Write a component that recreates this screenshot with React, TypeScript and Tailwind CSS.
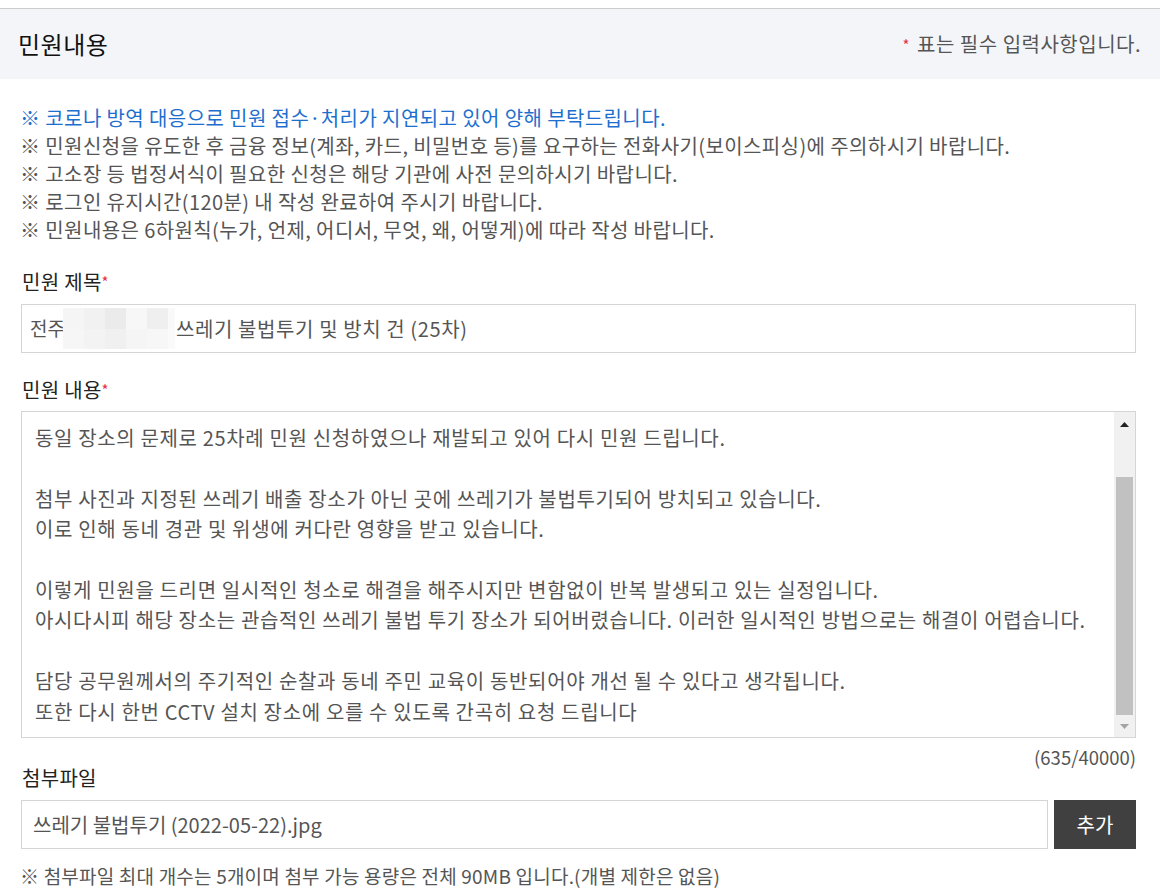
import React from "react";

const font = { fontFamily: '"Noto Sans CJK KR", "Noto Sans", sans-serif' };

const notices = [
  "※ 민원신청을 유도한 후 금융 정보(계좌, 카드, 비밀번호 등)를 요구하는 전화사기(보이스피싱)에 주의하시기 바랍니다.",
  "※ 고소장 등 법정서식이 필요한 신청은 해당 기관에 사전 문의하시기 바랍니다.",
  "※ 로그인 유지시간(120분) 내 작성 완료하여 주시기 바랍니다.",
  "※ 민원내용은 6하원칙(누가, 언제, 어디서, 무엇, 왜, 어떻게)에 따라 작성 바랍니다.",
];

const body = [
  "동일 장소의 문제로 25차례 민원 신청하였으나 재발되고 있어 다시 민원 드립니다.",
  "",
  "첨부 사진과 지정된 쓰레기 배출 장소가 아닌 곳에 쓰레기가 불법투기되어 방치되고 있습니다.",
  "이로 인해 동네 경관 및 위생에 커다란 영향을 받고 있습니다.",
  "",
  "이렇게 민원을 드리면 일시적인 청소로 해결을 해주시지만 변함없이 반복 발생되고 있는 실정입니다.",
  "아시다시피 해당 장소는 관습적인 쓰레기 불법 투기 장소가 되어버렸습니다. 이러한 일시적인 방법으로는 해결이 어렵습니다.",
  "",
  "담당 공무원께서의 주기적인 순찰과 동네 주민 교육이 동반되어야 개선 될 수 있다고 생각됩니다.",
  "또한 다시 한번 CCTV 설치 장소에 오를 수 있도록 간곡히 요청 드립니다",
];

export default function App() {
  return (
    <div className="w-[1160px] h-[888px] bg-white overflow-hidden text-[#555]" style={font}>
      <div className="h-[8px]" />
      <div className="h-[71px] border-t border-[#cccccc] bg-[#f4f5f9] flex items-center justify-between pl-[18px] pr-[19px]">
        <div className="text-[24px] tracking-[0.5px] text-[#111] leading-none">민원내용</div>
        <div className="text-[20px] tracking-[0.5px] text-[#555] leading-none flex items-center">
          <span className="text-[#e0344a] text-[15px] mr-[7px]">*</span>표는 필수 입력사항입니다.
        </div>
      </div>

      <div className="pl-[20px] pr-[24px] pt-[25px]">
        <div className="text-[20px] tracking-[0.4px] leading-[28px] whitespace-nowrap">
          <div className="text-[#1d6fce]">※ 코로나 방역 대응으로 민원 접수·처리가 지연되고 있어 양해 부탁드립니다.</div>
          {notices.map((n) => (
            <div key={n}>{n}</div>
          ))}
        </div>
      </div>

      <div className="pl-[21px] pr-[24px]">
        <div className="mt-[24px] pl-[1px] text-[20px] tracking-[0.3px] leading-[28px] text-[#222]">
          민원 제목<span className="text-[#e0344a] text-[15px] align-top">*</span>
        </div>
        <div className="mt-[8px] h-[49px] border border-[#d5d5d5] flex items-center pl-[8px] text-[19px] text-[#555]">
          <span>전주</span>
          <span className="grid grid-cols-[21px_21px_21px_21px_21px_7px] grid-rows-[21px_20px] w-[112px] h-[41px] ml-[-2px] mr-[1px]">
            <span className="bg-[#f5f5f5]" />
            <span className="bg-[#f1f1f1]" />
            <span className="bg-[#ebebeb]" />
            <span className="bg-[#f7f7f7]" />
            <span className="bg-[#efefef]" />
            <span className="bg-[#f9f9f9]" />
            <span className="bg-[#f6f6f6]" />
            <span className="bg-[#f3f3f3]" />
            <span className="bg-[#f0f0f0]" />
            <span className="bg-[#f5f5f5]" />
            <span className="bg-[#f7f7f7]" />
            <span className="bg-[#fafafa]" />
          </span>
          <span className="text-[20px] tracking-[0.6px]">쓰레기 불법투기 및 방치 건 (25차)</span>
        </div>

        <div className="mt-[23px] pl-[1px] text-[20px] tracking-[0.3px] leading-[28px] text-[#222]">
          민원 내용<span className="text-[#e0344a] text-[15px] align-top">*</span>
        </div>
        <div className="mt-[7px] h-[327px] border border-[#d5d5d5] flex">
          <div className="flex-1 pl-[13px] pt-[11px] text-[20px] tracking-[0.65px] leading-[30.4px] text-[#555] whitespace-nowrap overflow-hidden">
            {body.map((l, i) => (
              <div key={i} className="h-[30.4px]">{l}</div>
            ))}
          </div>
          <div className="w-[21px] bg-[#f1f1f1] flex flex-col items-center">
            <div className="h-[24px] w-full flex items-center justify-center">
              <svg width="9" height="5" viewBox="0 0 9 5"><path d="M0 5 L4.5 0 L9 5 Z" fill="#222" /></svg>
            </div>
            <div className="h-[41px]" />
            <div className="w-[17px] h-[238px] bg-[#c1c1c1]" />
            <div className="flex-1 w-full flex items-center justify-center">
              <svg width="9" height="5" viewBox="0 0 9 5"><path d="M0 0 L9 0 L4.5 5 Z" fill="#a3a3a3" /></svg>
            </div>
          </div>
        </div>
        <div className="mt-[10px] h-[18px] leading-[18px] text-right text-[18.5px] text-[#555]">(635/40000)</div>

        <div className="pl-[1px] text-[20px] tracking-[0.3px] leading-[24px] text-[#222]">첨부파일</div>
        <div className="mt-[10px] flex gap-[6px]">
          <div className="flex-1 h-[49px] border border-[#d5d5d5] flex items-center pl-[11px] text-[20px] text-[#555]">
            쓰레기 불법투기 (2022-05-22).jpg
          </div>
          <button className="w-[82px] h-[49px] bg-[#404040] text-white text-[20px]">추가</button>
        </div>
      </div>
      <div className="pl-[20px] mt-[13px] text-[19px] tracking-[0.2px] leading-[28px] text-[#555] whitespace-nowrap">
        ※ 첨부파일 최대 개수는 5개이며 첨부 가능 용량은 전체 90MB 입니다.(개별 제한은 없음)
      </div>
    </div>
  );
}
